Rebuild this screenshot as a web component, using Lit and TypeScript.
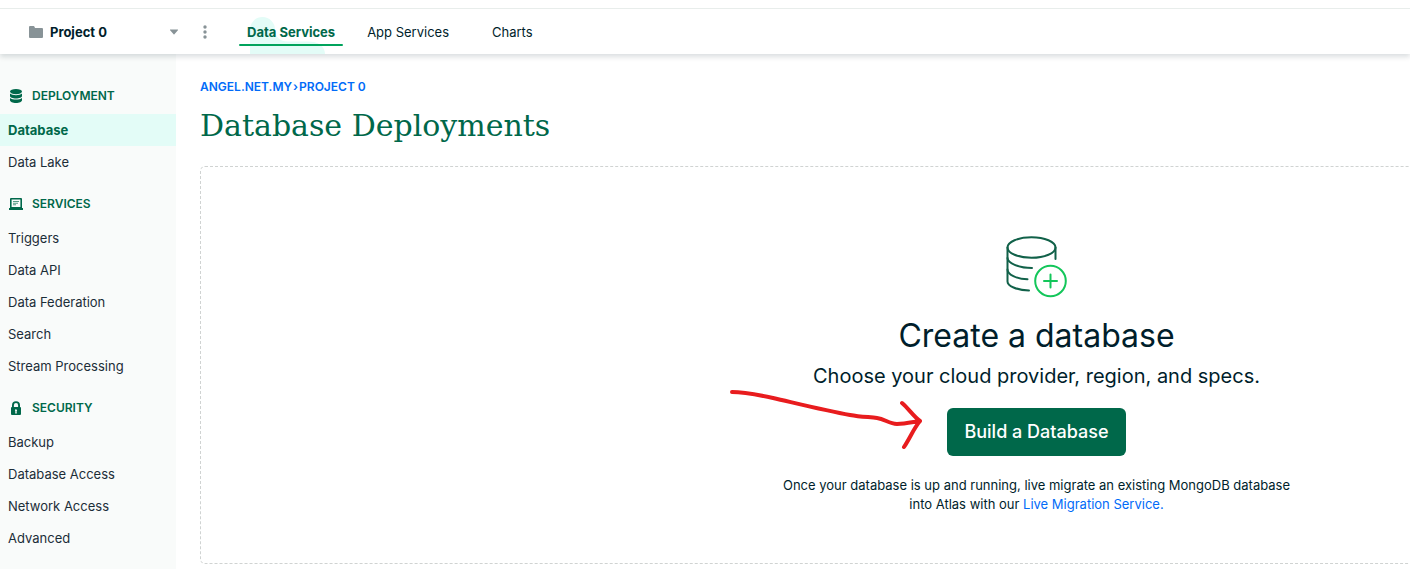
import { LitElement, html, css, svg } from "lit";
import { customElement } from "lit/decorators.js";

const databaseIcon = svg`<svg class="glyph" viewBox="0 0 16 16" aria-hidden="true">
  <ellipse cx="8" cy="3.6" rx="6" ry="2.6" fill="currentColor"/>
  <path fill="currentColor" d="M2 5.6C3.4 6.9 5.6 7.3 8 7.3s4.6-.4 6-1.7v2.3c0 1.4-2.7 2.5-6 2.5S2 9.3 2 7.9z"/>
  <path fill="currentColor" d="M2 9.9c1.400 1.300 3.600 1.700 6 1.700s4.600-.4 6-1.700v2.400c0 1.500-2.700 2.700-6 2.700s-6-1.200-6-2.700z"/>
</svg>`;

const laptopIcon = svg`<svg class="glyph" viewBox="0 0 16 16" aria-hidden="true">
  <path fill="currentColor" fill-rule="evenodd" d="M2 3a1 1 0 0 1 1-1h10a1 1 0 0 1 1 1v9h.6c.3 0 .4.2.4.4V14H1v-1.600c0-.2.1-.4.4-.4H2zm1.600.600v7.400h8.800V3.600z"/>
  <path fill="currentColor" opacity=".65" d="M5 5h6v1H5zm0 1.700h5v1H5zm0 1.600h3v.900H5z"/>
</svg>`;

const lockIcon = svg`<svg class="glyph" viewBox="0 0 16 16" aria-hidden="true">
  <path fill="currentColor" fill-rule="evenodd" d="M4 7V5.200a4 4 0 0 1 8 0V7a1 1 0 0 1 1 1v6a1 1 0 0 1-1 1H4a1 1 0 0 1-1-1V8a1 1 0 0 1 1-1zm1.900 0h4.200V5.200a2.100 2.100 0 0 0-4.200 0zM7 10.300c0 .4.200.7.400.900l-.2 2.300h1.600l-.2-2.300a1 1 0 1 0-1.600-.900z"/>
</svg>`;

const sections = [
  { title: "Deployment", icon: databaseIcon, items: ["Database", "Data Lake"] },
  {
    title: "Services",
    icon: laptopIcon,
    items: ["Triggers", "Data API", "Data Federation", "Search", "Stream Processing"],
  },
  {
    title: "Security",
    icon: lockIcon,
    items: ["Backup", "Database Access", "Network Access", "Advanced"],
  },
];

@customElement("top-bar")
export class TopBar extends LitElement {
  static styles = css`
    :host {
      display: block;
      position: relative;
      z-index: 1;
      padding-top: 8px;
      background: #fff;
      box-shadow: 0 3px 5px rgba(0, 30, 43, 0.14);
    }
    .bar {
      display: flex;
      align-items: stretch;
      height: 45px;
      border-top: 1px solid #e8edeb;
      font-size: 13px;
      line-height: 20px;
      color: #001e2b;
    }
    button {
      display: flex;
      align-items: center;
      border: 0;
      padding: 0;
      background: none;
      font: inherit;
      color: inherit;
      cursor: pointer;
    }
    .project {
      width: 151px;
      margin-left: 28px;
      gap: 6px;
      font-weight: 700;
    }
    .folder {
      width: 16px;
      height: 16px;
      color: #889397;
    }
    .caret {
      width: 10px;
      height: 6px;
      margin-left: auto;
      color: #889397;
    }
    .more {
      justify-content: center;
      width: 16px;
      margin-left: 18px;
      color: #889397;
    }
    .dots {
      width: 4px;
      height: 14px;
    }
    nav {
      display: flex;
      margin-left: 26px;
      gap: 16px;
    }
    .tab {
      position: relative;
      display: flex;
      align-items: center;
      padding: 0 8px;
      color: inherit;
      text-decoration: none;
    }
    .tab + .tab + .tab {
      margin-left: 11px;
    }
    .active {
      font-weight: 700;
      color: #00684a;
    }
    .active::after {
      content: "";
      position: absolute;
      inset: auto 0 8px;
      height: 2px;
      border-radius: 1px;
      background: #00a35c;
    }
    .blob {
      position: absolute;
      left: 11px;
      bottom: 0;
      width: 75px;
      height: 37px;
      fill: #e3fcf7;
    }
    .label {
      position: relative;
    }
  `;

  render() {
    return html`<header class="bar">
      <button class="project" type="button">
        <svg class="folder" viewBox="0 0 16 16" aria-hidden="true">
          <path fill="currentColor" d="M1 3a1 1 0 0 1 1-1h3.500a1 1 0 0 1 1 .700L7 4h7a1 1 0 0 1 1 1v8a1 1 0 0 1-1 1H2a1 1 0 0 1-1-1z"/>
        </svg>
        <span>Project 0</span>
        <svg class="caret" viewBox="0 0 10 6" aria-hidden="true">
          <path fill="currentColor" d="M1.500.500h7c.5 0 .7.400.4.700L5.400 5.200a.5.500 0 0 1-.8 0L1.100 1.200C.8.900 1 .5 1.500.500z"/>
        </svg>
      </button>
      <button class="more" type="button" aria-label="Project options">
        <svg class="dots" viewBox="0 0 4 14" aria-hidden="true">
          <g fill="currentColor"><circle cx="2" cy="2" r="1.700"/><circle cx="2" cy="7" r="1.700"/><circle cx="2" cy="12" r="1.700"/></g>
        </svg>
      </button>
      <nav>
        <a class="tab active" href="#data" aria-current="page">
          <svg class="blob" viewBox="0 0 75 37" aria-hidden="true">
            <path d="M0 37V12.500a12.500 12.500 0 0 1 25 0C25 20 30 24.500 38 24.500H58C68 24.500 75 29 75 37z"/>
          </svg>
          <span class="label">Data Services</span>
        </a>
        <a class="tab" href="#apps">App Services</a>
        <a class="tab" href="#charts">Charts</a>
      </nav>
    </header>`;
  }
}

@customElement("side-nav")
export class SideNav extends LitElement {
  static styles = css`
    :host {
      display: block;
      flex: none;
      width: 176px;
      padding: 16px 0;
      box-sizing: border-box;
      background: #f9fbfa;
      font-size: 13px;
      color: #1c2d38;
    }
    .title {
      display: flex;
      align-items: center;
      gap: 8px;
      margin: 0;
      padding: 18px 8px 10px;
      font-size: 12px;
      font-weight: 600;
      line-height: 16px;
      text-transform: uppercase;
      color: #00684a;
    }
    .glyph {
      width: 16px;
      height: 16px;
    }
    ul {
      margin: 0;
      padding: 0;
      list-style: none;
    }
    .item {
      display: block;
      padding: 6px 8px;
      line-height: 20px;
      color: inherit;
      text-decoration: none;
    }
    .current {
      background: #e3fcf7;
      font-weight: 700;
      color: #00684a;
    }
  `;

  render() {
    return html`<nav>
      ${sections.map(
        (section) => html`<section>
          <h2 class="title">${section.icon}<span>${section.title}</span></h2>
          <ul>
            ${section.items.map(
              (item) => html`<li><a class="item ${item === "Database" ? "current" : ""}" href="#">${item}</a></li>`
            )}
          </ul>
        </section>`
      )}
    </nav>`;
  }
}

@customElement("app-root")
export class AppRoot extends LitElement {
  static styles = css`
    :host {
      display: flex;
      flex-direction: column;
      min-height: 100vh;
      overflow: hidden;
      background: #fff;
      font-family: Inter, "Liberation Sans", sans-serif;
      color: #001e2b;
    }
    .body {
      display: flex;
      flex: 1;
    }
    main {
      flex: 1;
      min-width: 1673px;
      padding: 24px 24px 5px;
    }
    .crumbs {
      display: flex;
      gap: 1px;
      font-size: 12px;
      font-weight: 600;
      line-height: 18px;
      text-transform: uppercase;
      color: #016bf8;
    }
    a {
      color: #016bf8;
      text-decoration: none;
    }
    h1 {
      margin: 9px 0 19px;
      font-family: "DejaVu Serif", serif;
      font-size: 30px;
      font-weight: 400;
      line-height: 42px;
      color: #00684a;
    }
    .card {
      display: flex;
      flex-direction: column;
      align-items: center;
      padding: 64px 0 49px;
      border: 1px dashed #d0d3d2;
      border-radius: 5px;
      text-align: center;
    }
    .art {
      width: 72px;
      height: 72px;
    }
    h2 {
      margin: 12px 0 0;
      font-size: 32px;
      font-weight: 400;
      line-height: 42px;
    }
    .lead {
      margin: 3px 0 16px;
      font-size: 20px;
      line-height: 32px;
    }
    .action {
      position: relative;
      display: flex;
    }
    .build {
      height: 48px;
      padding: 0 17px;
      border: 0;
      border-radius: 6px;
      background: #00684a;
      font: 500 18px/24px Inter, "Liberation Sans", sans-serif;
      color: #fff;
      cursor: pointer;
    }
    .arrow {
      position: absolute;
      right: calc(100% + 24px);
      top: -20px;
      width: 196px;
      height: 62px;
    }
    .note {
      margin: 20px 0 0;
      font-size: 13px;
      line-height: 19px;
    }
  `;

  render() {
    return html`
      <top-bar></top-bar>
      <div class="body">
        <side-nav></side-nav>
        <main>
          <div class="crumbs">
            <a href="#org">Angel.net.my</a><span>›</span><a href="#project">Project 0</a>
          </div>
          <h1>Database Deployments</h1>
          <section class="card">
            <svg class="art" viewBox="1 1 72 72" fill="none" stroke-width="2" stroke-linecap="round" aria-hidden="true">
              <g stroke="#116149">
                <ellipse cx="31.500" cy="17.500" rx="24" ry="10.300"/>
                <path d="M7.500 17.500v34c0 4.500 9 8.500 21.500 9M55.500 17.500v11.500"/>
                <path d="M7.500 28c0 5 11 10 24.500 10M7.500 39.500c0 5 9 9.500 20 9.800"/>
              </g>
              <g stroke="#13c65a">
                <circle cx="50.500" cy="51" r="15.300"/>
                <path d="M50.500 44.500v13M44 51h13"/>
              </g>
            </svg>
            <h2>Create a database</h2>
            <p class="lead">Choose your cloud provider, region, and specs.</p>
            <div class="action">
              <button class="build" type="button">Build a Database</button>
              <svg class="arrow" viewBox="0 0 196 62" fill="none" stroke="#e81c1e" stroke-width="4" stroke-linecap="round" stroke-linejoin="round" aria-hidden="true">
                <path d="M5 4C18 4 32 7 46 10C72 16 100 23 123 27C134 29 143 29 150 30C158 31 162 36 170 36C178 36 186 34 193 33M175 15C182 21 186 28 193 33C187 40 183 50 177 59"/>
              </svg>
            </div>
            <p class="note">
              Once your database is up and running, live migrate an existing MongoDB database<br />
              into Atlas with our <a href="#migration">Live Migration Service.</a>
            </p>
          </section>
        </main>
      </div>
    `;
  }
}
